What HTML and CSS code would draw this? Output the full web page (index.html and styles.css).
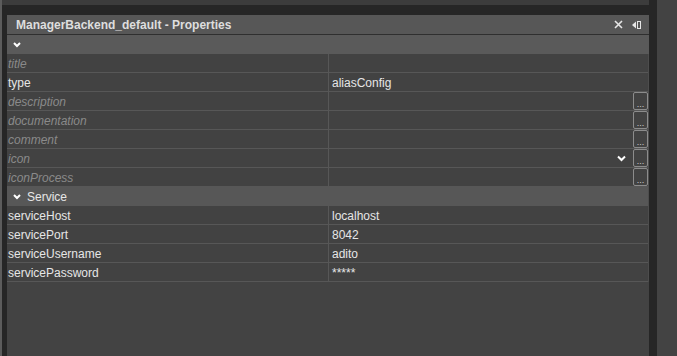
FILE: index.html
```html
<!DOCTYPE html>
<html lang="en">
<head>
    <meta charset="UTF-8">
    <meta name="viewport" content="width=device-width, initial-scale=1.0">
    <title>ManagerBackend_default - Properties</title>
    <link rel="stylesheet" href="styles.css">
</head>
<body>
    <div class="edge"></div>
    <div class="main">
        <div class="top-strip"></div>
        <div class="panel">
            <div class="panel-header">
                <span class="panel-title">ManagerBackend_default - Properties</span>
                <span class="header-icons">
                    <svg width="9" height="9" viewBox="0 0 9 9"><path d="M1 1L8 8M8 1L1 8" stroke="#e6e6e6" stroke-width="1.6"/></svg>
                    <svg width="9" height="8" viewBox="0 0 9 8"><path d="M0 4L4 0.5V7.5Z" fill="#e6e6e6"/><rect x="5.5" y="0.5" width="3" height="7" fill="none" stroke="#e6e6e6" stroke-width="1"/></svg>
                </span>
            </div>
            <div class="toolbar">
                <svg class="chev" width="8" height="6" viewBox="0 0 8 6"><path d="M1 1L4 4L7 1" fill="none" stroke="#fff" stroke-width="2"/></svg>
            </div>
            <div class="rows">
                <div class="row"><div class="name empty">title</div><div class="value"></div></div>
                <div class="row"><div class="name">type</div><div class="value">aliasConfig</div></div>
                <div class="row"><div class="name empty">description</div><div class="value"><span class="more">...</span></div></div>
                <div class="row"><div class="name empty">documentation</div><div class="value"><span class="more">...</span></div></div>
                <div class="row"><div class="name empty">comment</div><div class="value"><span class="more">...</span></div></div>
                <div class="row"><div class="name empty">icon</div><div class="value">
                    <svg class="combo" width="9" height="7" viewBox="0 0 9 7"><path d="M1 1.5L4.5 5L8 1.5" fill="none" stroke="#fff" stroke-width="2"/></svg>
                    <span class="more">...</span></div></div>
                <div class="row"><div class="name empty">iconProcess</div><div class="value"><span class="more">...</span></div></div>
                <div class="group">
                    <svg class="chev" width="8" height="6" viewBox="0 0 8 6"><path d="M1 1L4 4L7 1" fill="none" stroke="#fff" stroke-width="2"/></svg>
                    <span>Service</span>
                </div>
                <div class="row"><div class="name">serviceHost</div><div class="value">localhost</div></div>
                <div class="row"><div class="name">servicePort</div><div class="value">8042</div></div>
                <div class="row"><div class="name">serviceUsername</div><div class="value">adito</div></div>
                <div class="row"><div class="name">servicePassword</div><div class="value">*****</div></div>
            </div>
        </div>
    </div>
    <div class="side"></div>
</body>
</html>
```

FILE: styles.css
```css
body {
    margin: 0;
    width: 677px;
    height: 356px;
    display: flex;
    overflow: hidden;
    font-family: "Liberation Sans", Arial, sans-serif;
    font-size: 12px;
    background: #262626;
}
.edge {
    width: 2px;
    background: #5c5c5c;
}
.main {
    width: 655px;
    display: flex;
    flex-direction: column;
    background: #262626;
    padding-right: 8px;
    box-sizing: border-box;
}
.top-strip {
    height: 5px;
    background: #3c3c3c;
}
.panel {
    margin: 10px 0 0 5px;
    flex: 1;
    background: #434343;
    display: flex;
    flex-direction: column;
}
.panel-header {
    height: 19px;
    background: #575757;
    border-bottom: 1px solid #2f2f2f;
    display: flex;
    align-items: center;
    justify-content: space-between;
    padding: 0 8px 0 9px;
}
.panel-title {
    color: #dedede;
    font-weight: bold;
}
.header-icons {
    display: flex;
    align-items: center;
    gap: 9px;
}
.toolbar {
    height: 19px;
    background: #5a5a5a;
    display: flex;
    align-items: center;
    padding-left: 6px;
}
.rows {
    border-right: 1px solid #4d4d4d;
}
.row {
    display: flex;
    height: 18px;
    border-bottom: 1px solid #575757;
    background: #424242;
}
.name {
    width: 320px;
    border-right: 1px solid #575757;
    padding: 2px 0 0 1px;
    color: #e6e6e6;
    line-height: 16px;
}
.name.empty {
    color: #8a8a8a;
    font-style: italic;
}
.value {
    flex: 1;
    display: flex;
    align-items: center;
    padding: 2px 0 0 3px;
    color: #e6e6e6;
    line-height: 16px;
}
.more {
    margin: -2px 0 0 auto;
    width: 13px;
    height: 16px;
    border: 1px solid #8c8c8c;
    border-radius: 2px;
    color: #d0d0d0;
    font-size: 9px;
    line-height: 22px;
    text-align: center;
    overflow: hidden;
}
.combo {
    margin: -1px 7px 0 auto;
}
.combo + .more {
    margin-left: 0;
}
.group {
    height: 19px;
    background: #575757;
    display: flex;
    align-items: center;
    gap: 6px;
    padding-left: 6px;
    color: #e6e6e6;
}
.group span {
    padding-top: 1px;
}
.side {
    width: 20px;
    background: #434343;
}
```
